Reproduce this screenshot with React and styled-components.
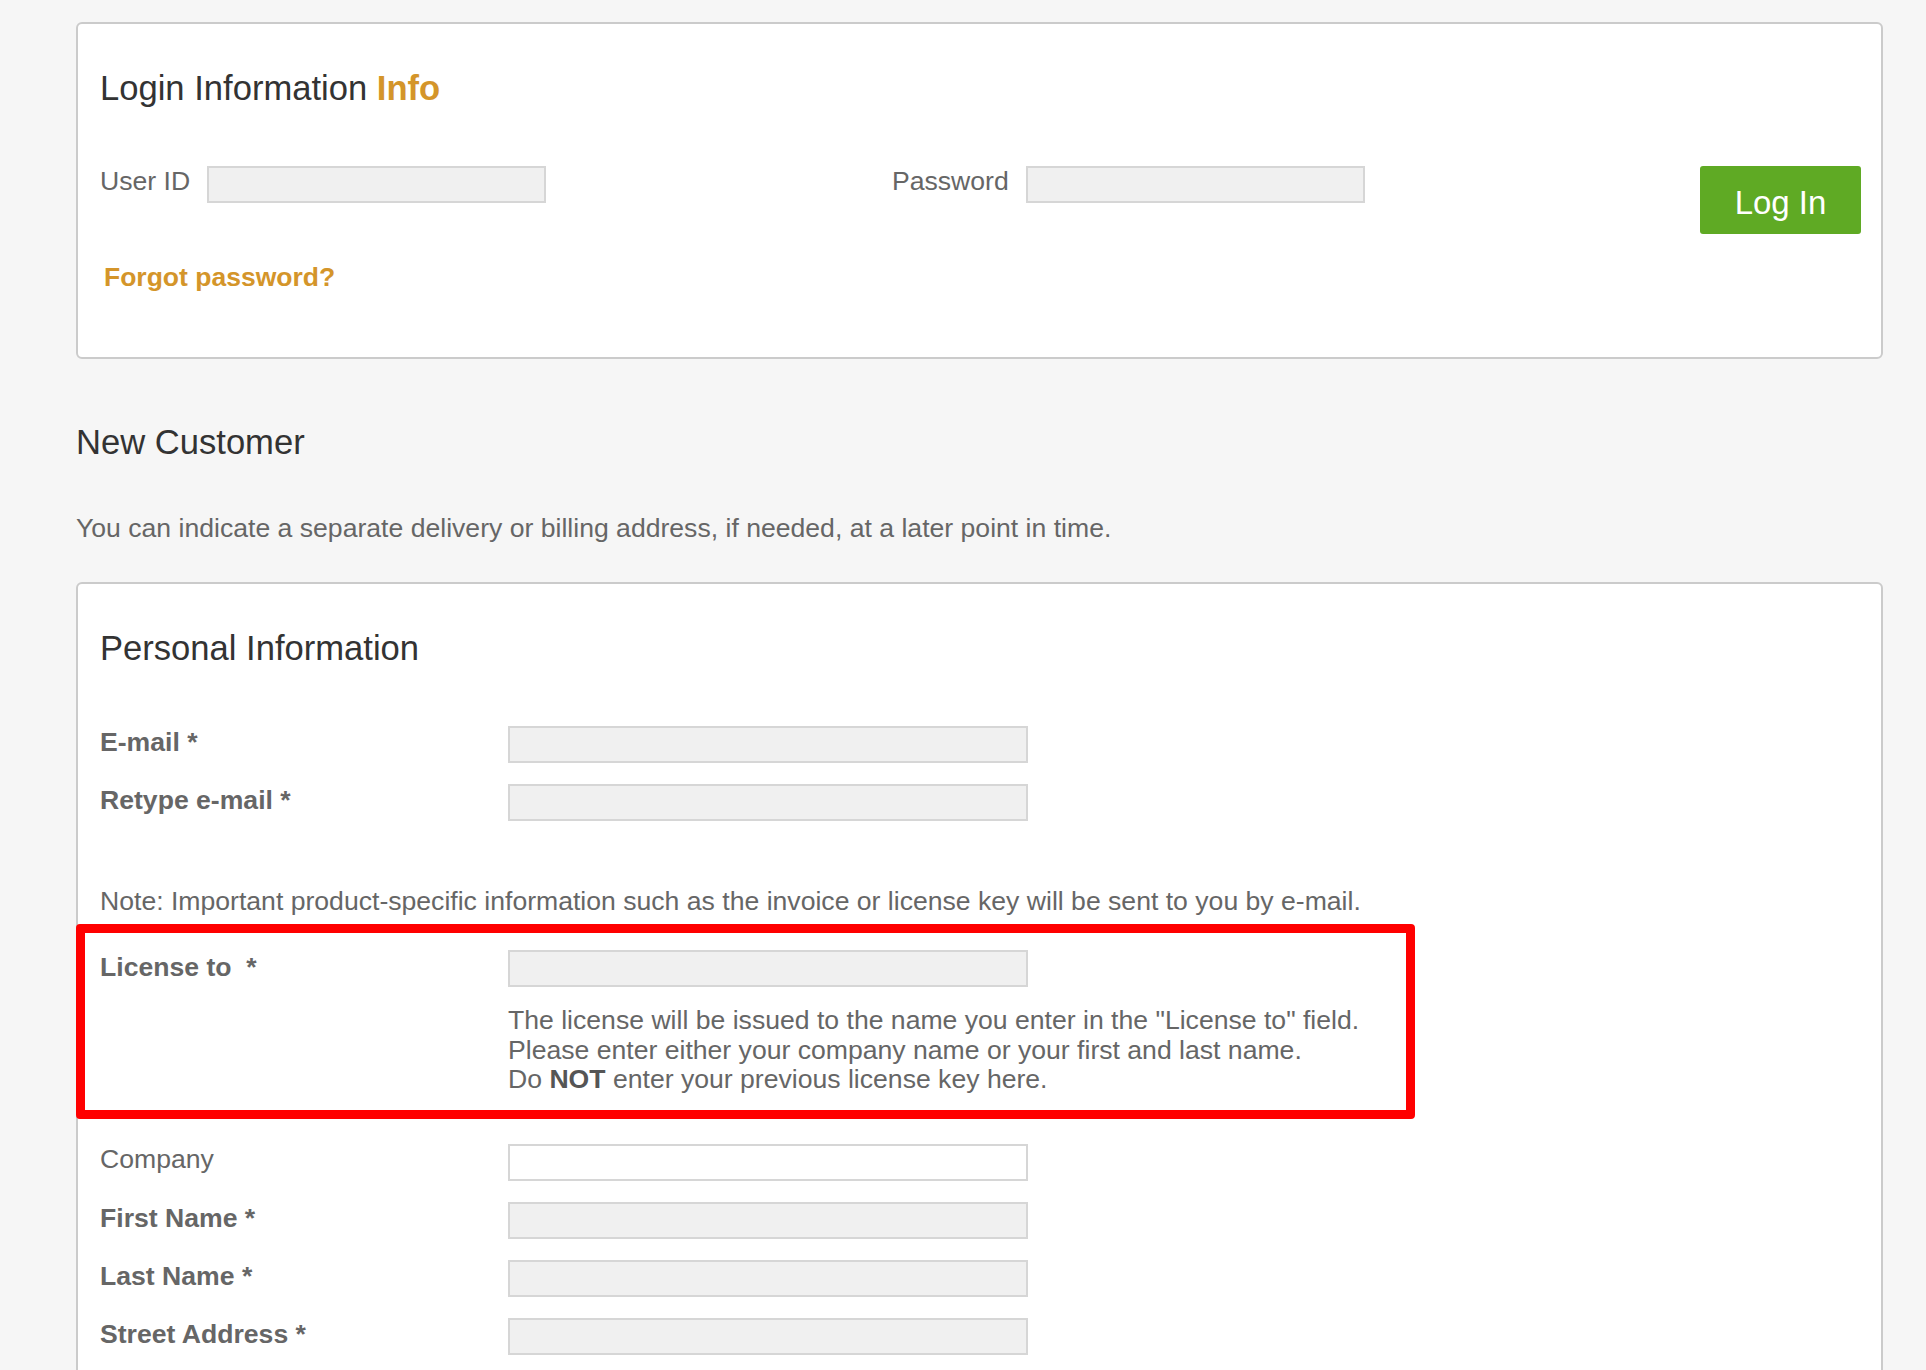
import React from "react"
import styled, { createGlobalStyle } from "styled-components"

const GlobalStyle = createGlobalStyle`
  html, body {
    margin: 0;
    padding: 0;
    background: #f6f6f6;
  }
  body {
    font-family: "Liberation Sans", Arial, Helvetica, sans-serif;
    color: #666;
  }
  * {
    box-sizing: border-box;
  }
`

const Page = styled.div`
  width: 1807px;
  margin-left: 76px;
  padding-top: 22px;
`

const Panel = styled.section`
  background: #fff;
  border: 2px solid #cbcbcb;
  border-radius: 6px;
  padding: 44px 20px ${p => p.$bottom}px 22px;
`

const Heading = styled.h2`
  margin: 0;
  font-size: 34.6px;
  line-height: 40px;
  font-weight: normal;
  color: #333;

  span {
    color: #d4952a;
    font-weight: bold;
  }
`

const SectionTitle = styled(Heading)`
  margin-top: 63px;
`

const Intro = styled.p`
  margin: 51px 0 39px;
  font-size: 26.6px;
  line-height: 30px;
  color: #666;
`

const LoginRow = styled.div`
  display: flex;
  align-items: flex-start;
  margin-top: 58px;
`

const LoginField = styled.div`
  display: flex;
  align-items: flex-start;
  gap: 17px;
  width: ${p => p.$width || "auto"};
`

const Label = styled.label`
  font-size: 26.6px;
  line-height: 30px;
  padding-top: ${p => p.$top || 0}px;
  font-weight: ${p => (p.$bold ? "bold" : "normal")};
  color: #666;
  white-space: pre;
`

const TextInput = styled.input`
  width: ${p => p.$width}px;
  height: 37px;
  margin: 0;
  padding: 0 8px;
  border: 2px solid #d6d6d6;
  background: ${p => (p.$plain ? "#fff" : "#f0f0f0")};
  font-size: 20px;
  outline: none;
`

const LoginButton = styled.button`
  margin-left: auto;
  width: 161px;
  height: 68px;
  padding: 5px 0 0;
  border: none;
  border-radius: 3px;
  background: #5faa24;
  color: #fff;
  font-family: inherit;
  font-size: 33px;
  cursor: pointer;
`

const ForgotLink = styled.a`
  display: block;
  margin-top: 28px;
  padding-left: 4px;
  font-size: 26.5px;
  line-height: 30px;
  font-weight: bold;
  color: #d4952a;
  text-decoration: none;
`

const Fields = styled.div`
  margin-top: ${p => p.$top}px;
  display: flex;
  flex-direction: column;
  gap: 21px;
`

const FieldRow = styled.div`
  display: grid;
  grid-template-columns: 408px 520px;
  align-items: start;
`

const Note = styled.p`
  margin: 65px 0 8px;
  font-size: 26.6px;
  line-height: 30px;
  color: #666;
`

const Highlight = styled.div`
  width: 1339px;
  margin-left: -24px;
  border: 9px solid #ff0000;
  border-radius: 4px;
  padding: 17px 0 15px 15px;
`

const HelpText = styled.p`
  grid-column: 2;
  margin: 19px 0 0;
  font-size: 26.6px;
  line-height: 29.5px;
  color: #666;
  white-space: nowrap;

  b {
    color: #555;
  }
`

function Field({ label, bold = true, plain, top = 1 }) {
  return (
    <FieldRow>
      <Label $bold={bold} $top={top}>{label}</Label>
      <TextInput $width={520} $plain={plain} />
    </FieldRow>
  )
}

export default function App() {
  return (
    <>
      <GlobalStyle />
      <Page>
        <Panel $bottom={65}>
          <Heading>
            Login Information <span>Info</span>
          </Heading>
          <LoginRow>
            <LoginField $width="792px">
              <Label>User ID</Label>
              <TextInput $width={339} />
            </LoginField>
            <LoginField>
              <Label>Password</Label>
              <TextInput $width={339} type="password" />
            </LoginField>
            <LoginButton>Log In</LoginButton>
          </LoginRow>
          <ForgotLink href="#">Forgot password?</ForgotLink>
        </Panel>

        <SectionTitle>New Customer</SectionTitle>
        <Intro>
          You can indicate a separate delivery or billing address, if needed, at a later point in time.
        </Intro>

        <Panel $bottom={60}>
          <Heading>Personal Information</Heading>
          <Fields $top={58}>
            <Field label="E-mail *" />
            <Field label="Retype e-mail *" />
          </Fields>
          <Note>
            Note: Important product-specific information such as the invoice or license key will be sent to you by e-mail.
          </Note>
          <Highlight>
            <FieldRow>
              <Label $bold $top={2}>{"License to  *"}</Label>
              <TextInput $width={520} />
              <HelpText>
                The license will be issued to the name you enter in the "License to" field.
                <br />
                Please enter either your company name or your first and last name.
                <br />
                Do <b>NOT</b> enter your previous license key here.
              </HelpText>
            </FieldRow>
          </Highlight>
          <Fields $top={25}>
            <Field label="Company" bold={false} plain top={0} />
            <Field label="First Name *" />
            <Field label="Last Name *" />
            <Field label="Street Address *" />
          </Fields>
        </Panel>
      </Page>
    </>
  )
}
